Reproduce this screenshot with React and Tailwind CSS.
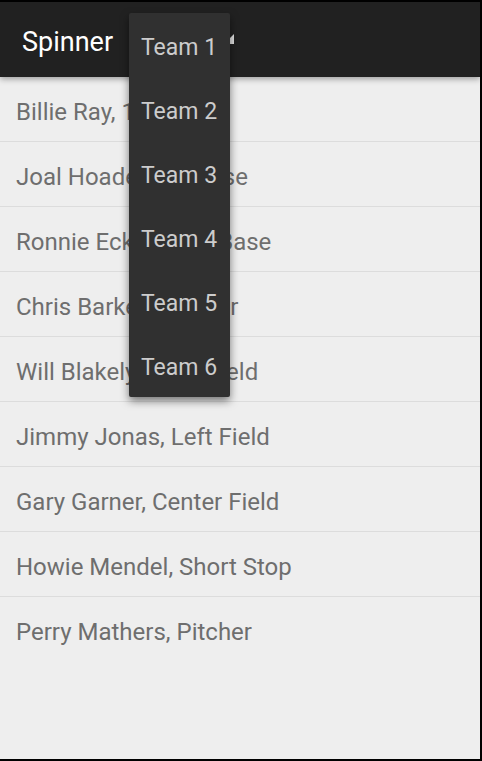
import React from 'react';

const players = [
    'Billie Ray, 1st Base',
    'Joal Hoade, 2nd Base',
    'Ronnie Eckers, 3rd Base',
    'Chris Barker, Catcher',
    'Will Blakely, Right Field',
    'Jimmy Jonas, Left Field',
    'Gary Garner, Center Field',
    'Howie Mendel, Short Stop',
    'Perry Mathers, Pitcher',
];

const teams = ['Team 1', 'Team 2', 'Team 3', 'Team 4', 'Team 5', 'Team 6'];

export default function App() {
    return <div className="relative w-[482px] h-[761px] bg-black pt-[2px] pr-[2px] pb-[2px] overflow-hidden" style={{fontFamily: 'Roboto, "Noto Sans", sans-serif'}}>
        <div className="flex flex-col h-full bg-[#eeeeee]">
            <div className="relative z-10 flex items-center h-[75px] flex-none bg-[#212121] pl-[22px] pt-[6px] shadow-[0_2px_6px_rgba(0,0,0,0.35)]">
                <span className="text-white text-[27px] leading-none">Spinner</span>
                <span className="absolute left-[224px] top-[32px] w-[10px] h-[10px] bg-[#e0e0e0] [clip-path:polygon(100%_0,100%_100%,0_100%)]"></span>
            </div>
            <div className="flex-1 flex flex-col">
                {players.map((name, i) => <div key={name} className={'flex items-center h-[65px] pl-4 pt-[5px] text-[24px] text-[#6e6e6e] ' + (i < players.length - 1 ? 'border-b border-[#dcdcdc]' : '')}>
                    <span className="leading-none whitespace-nowrap">{name}</span>
                </div>)}
            </div>
        </div>
        <div className="absolute left-[129px] top-[13px] z-20 w-[101px] bg-[#303030] rounded-[2px] shadow-[0_4px_8px_rgba(0,0,0,0.5)]">
            {teams.map(team => <div key={team} className="flex items-center h-[64px] pl-3 pt-[4px] text-[23px] text-[#cccccc]">
                <span className="leading-none whitespace-nowrap">{team}</span>
            </div>)}
        </div>
    </div>;
}
